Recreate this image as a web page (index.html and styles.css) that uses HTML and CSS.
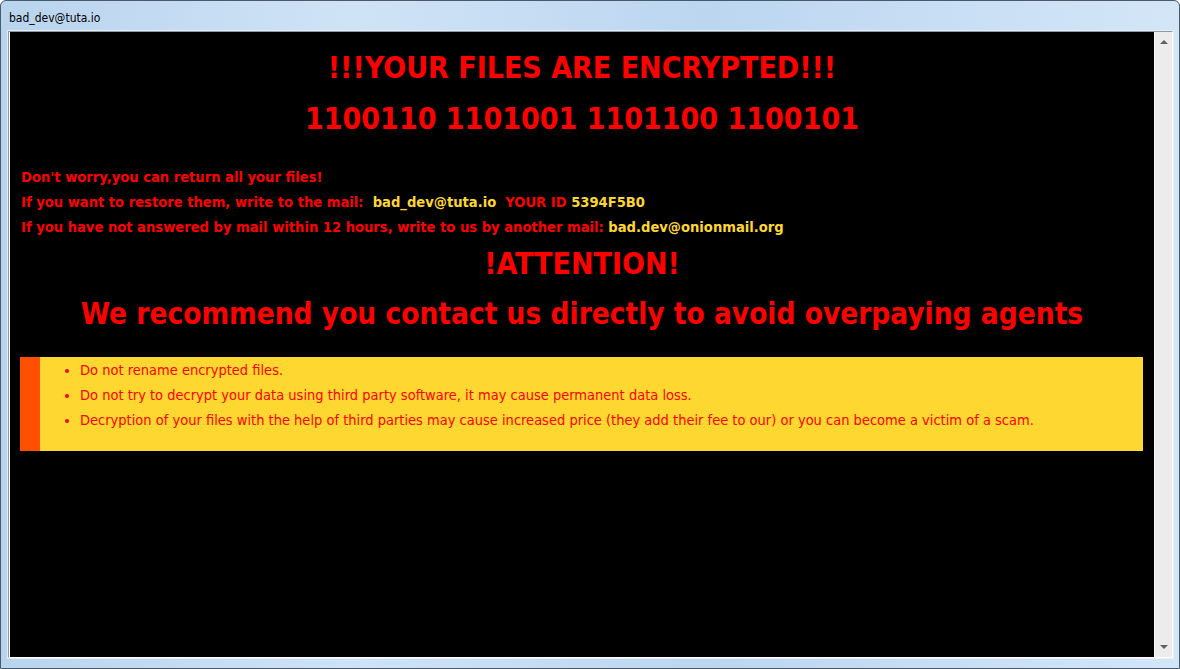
FILE: index.html
```html
<!DOCTYPE html>
<html>
<head>
<meta charset="utf-8">
<link rel="stylesheet" href="styles.css">
</head>
<body>
<div class="window">
  <div class="titlebar"><span class="title">bad_dev@tuta.io</span></div>
  <div class="client">
    <div class="content">
      <h1 class="big">!!!YOUR FILES ARE ENCRYPTED!!!</h1>
      <h1 class="big code">1100110 1101001 1101100 1100101</h1>
      <div class="info">
        <p>Don't worry,you can return all your files!</p>
        <p>If you want to restore them, write to the mail: &nbsp;<span class="y">bad_dev@tuta.io</span> &nbsp;YOUR ID <span class="y">5394F5B0</span></p>
        <p>If you have not answered by mail within 12 hours, write to us by another mail: <span class="y">bad.dev@onionmail.org</span></p>
      </div>
      <h1 class="big att">!ATTENTION!</h1>
      <h1 class="big rec">We recommend you contact us directly to avoid overpaying agents</h1>
      <div class="note">
        <div class="bar"></div>
        <ul class="list">
          <li>Do not rename encrypted files.</li>
          <li>Do not try to decrypt your data using third party software, it may cause permanent data loss.</li>
          <li>Decryption of your files with the help of third parties may cause increased price (they add their fee to our) or you can become a victim of a scam.</li>
        </ul>
      </div>
    </div>
    <div class="scrollbar">
      <div class="arrow up"></div>
      <div class="arrow down"></div>
    </div>
  </div>
</div>
</body>
</html>
```
FILE: styles.css
```css
html, body {
  margin: 0;
  padding: 0;
  width: 1180px;
  height: 669px;
  overflow: hidden;
}
.window {
  box-sizing: border-box;
  width: 1180px;
  height: 669px;
  border: 1px solid #4a5a6a;
  border-radius: 6px 6px 0 0;
  background: linear-gradient(90deg, #b9d4ee 0%, #cfe3f6 30%, #bcd6f0 60%, #d3e6f8 100%);
  display: flex;
  flex-direction: column;
  padding: 0 6px 10px 7px;
}
.titlebar {
  height: 30px;
  display: flex;
  align-items: center;
  flex: none;
}
.title {
  font-family: "DejaVu Sans Condensed", "DejaVu Sans", sans-serif;
  font-size: 12px;
  color: #000;
  margin-left: 1px;
  margin-top: 3px;
}
.client {
  flex: 1;
  display: flex;
  border: 1px solid #8c9aa8;
  border-right-color: #fff;
  border-bottom-color: #fff;
  box-shadow: 0 0 0 1px #e8eef4;
  min-height: 0;
}
.content {
  flex: 1;
  background: #000;
  border-left: 1px solid #fff;
  padding: 18px 11px 0 11px;
  font-family: "DejaVu Sans Condensed", "DejaVu Sans", sans-serif;
  color: #ff0000;
}
.big {
  margin: 0;
  text-align: center;
  font-size: 30px;
  line-height: 36px;
  font-weight: bold;
}
.code {
  margin-top: 15px;
}
.info {
  margin-top: 27px;
}
.info p {
  margin: 0;
  font-size: 14.6px;
  font-weight: bold;
  line-height: 25px;
}
.y {
  color: #ffd731;
}
.att {
  margin-top: 7px;
}
.rec {
  margin-top: 14px;
  font-size: 29.5px;
}
.note {
  margin: 25px 0 0 -1px;
  display: flex;
  background: #ffd731;
  height: 94px;
}
.bar {
  width: 20px;
  background: #ff5000;
  flex: none;
}
.list {
  margin: 0;
  padding: 1px 0 0 40px;
  font-size: 14.5px;
  line-height: 25px;
  color: #ff0000;
}
.scrollbar {
  width: 17px;
  flex: none;
  background: #ececec;
  border-left: 1px solid #f8f8f8;
  display: flex;
  flex-direction: column;
  justify-content: space-between;
  align-items: center;
  padding: 8px 0;
}
.arrow {
  width: 0;
  height: 0;
  border-left: 4px solid transparent;
  border-right: 4px solid transparent;
}
.up {
  border-bottom: 4px solid #606060;
}
.down {
  border-top: 4px solid #606060;
}
```
